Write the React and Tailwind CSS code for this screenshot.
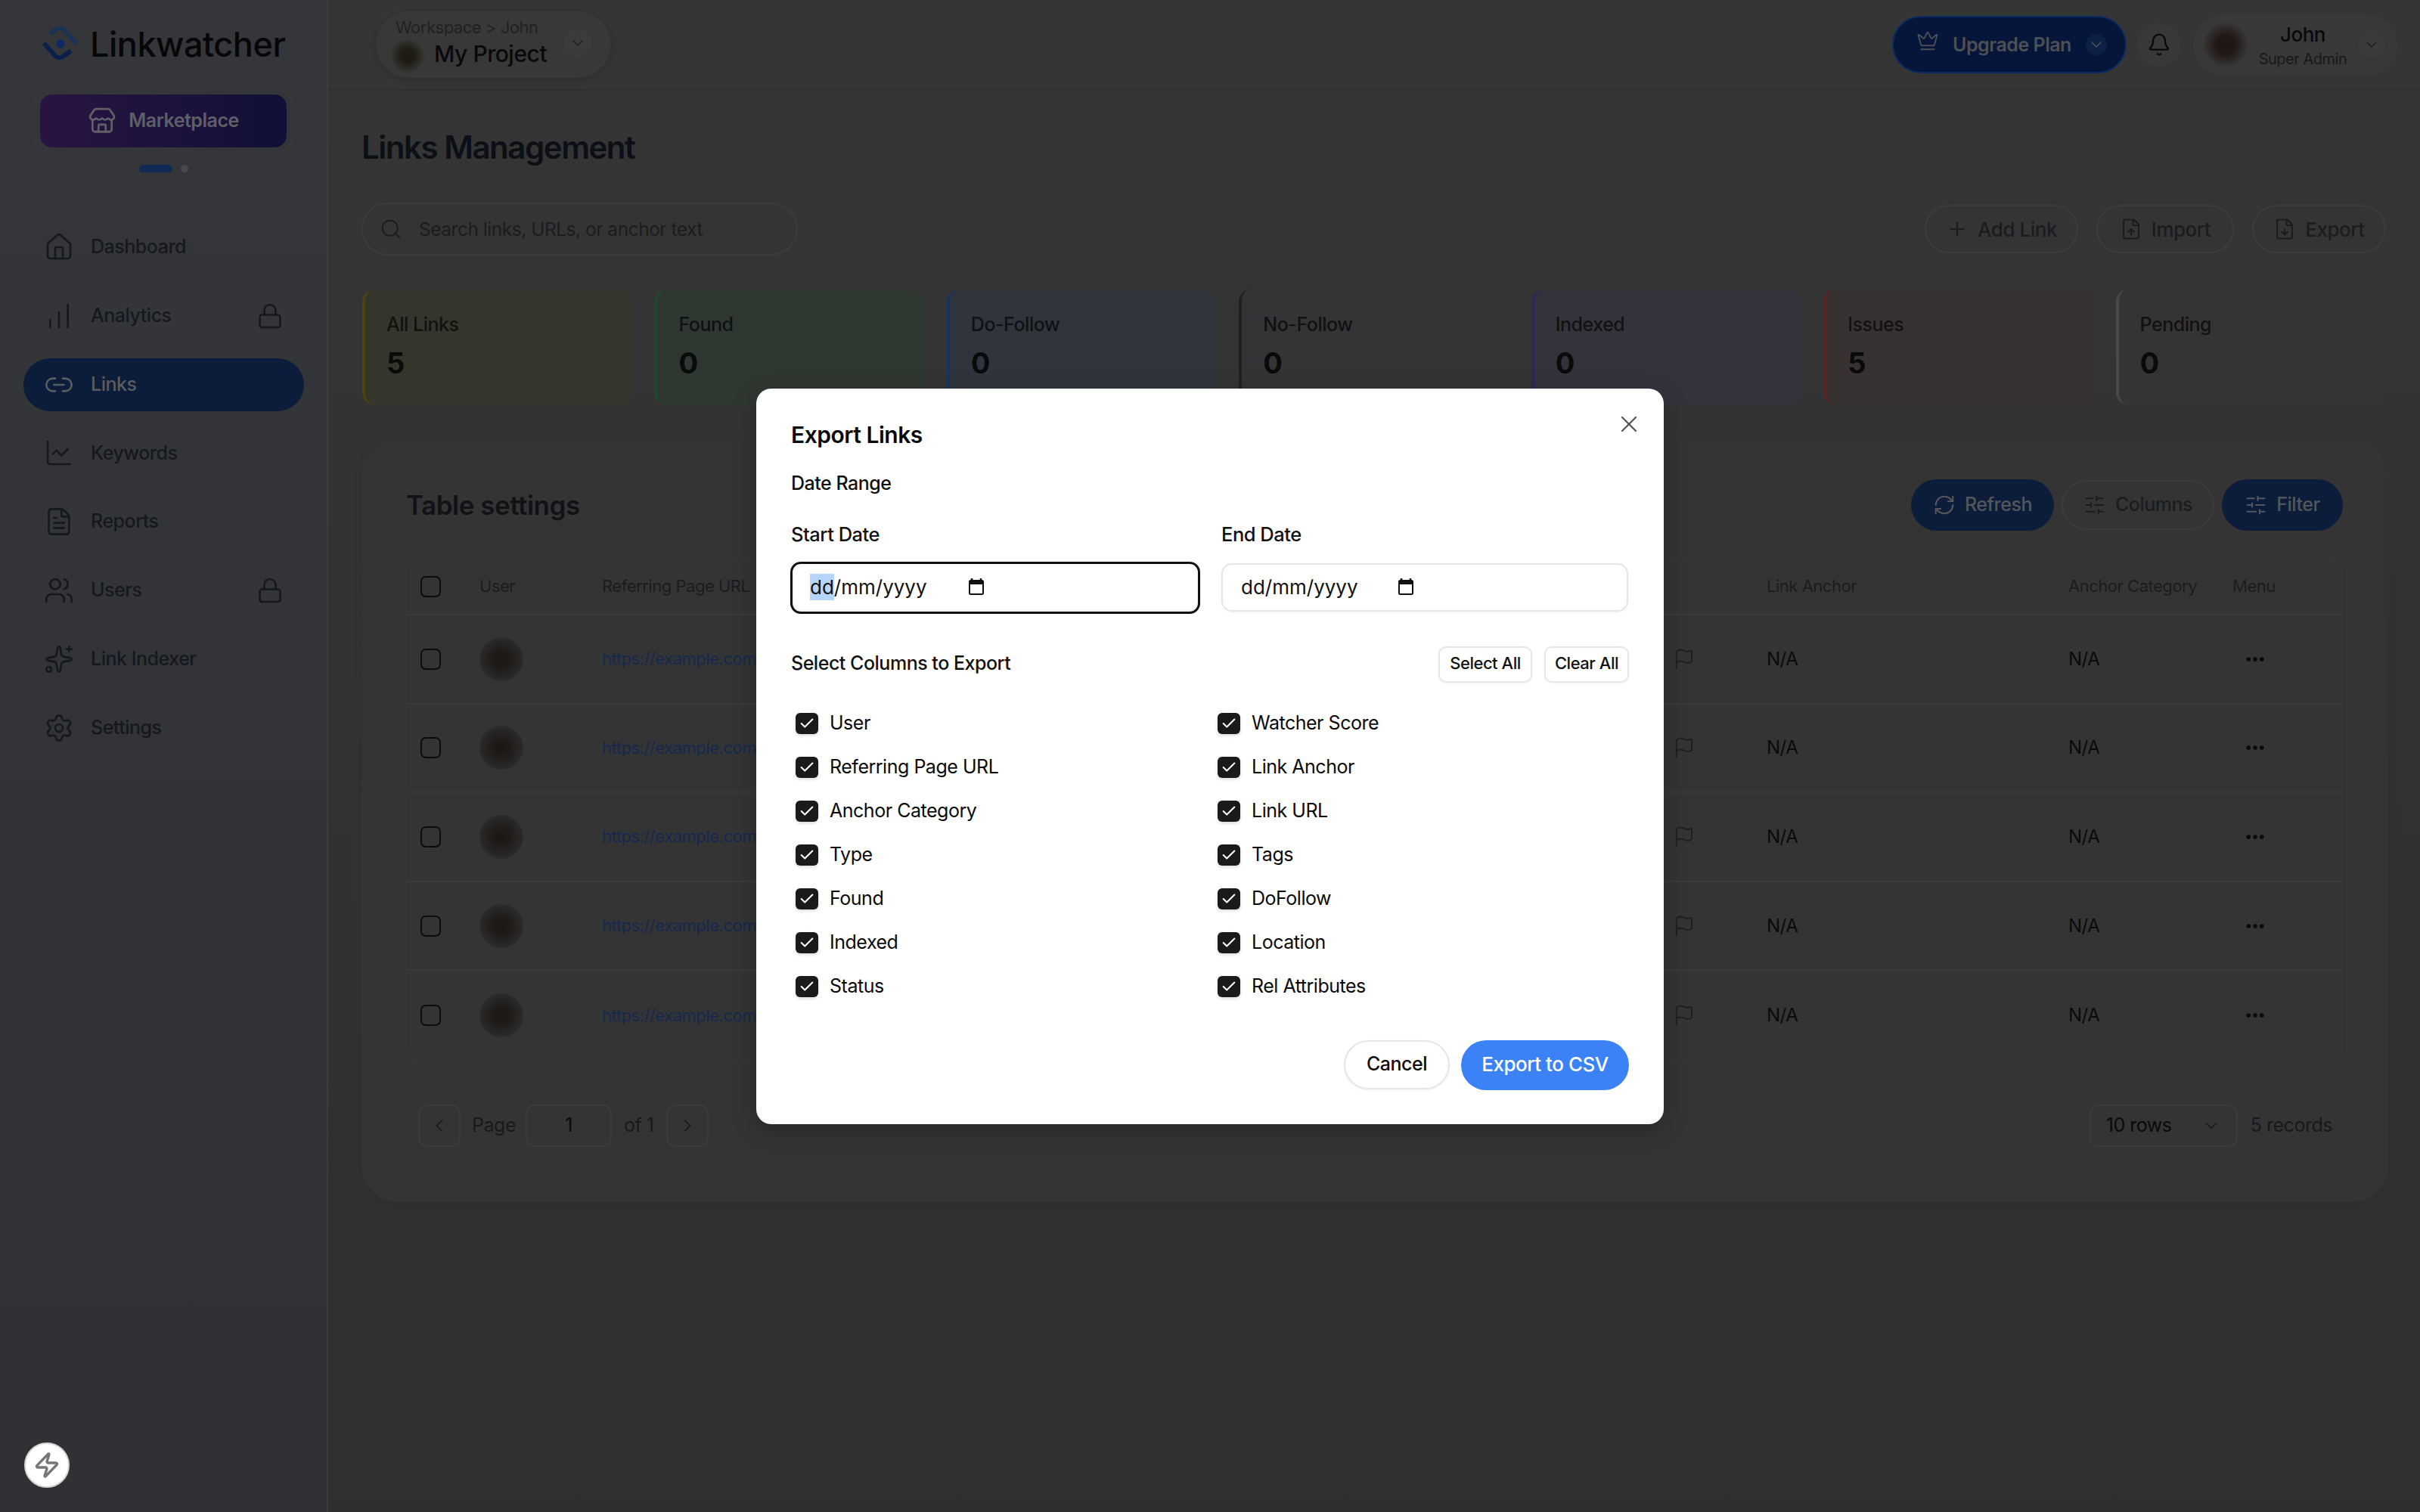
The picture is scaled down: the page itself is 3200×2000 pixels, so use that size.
import { Bell, Check, ChevronDown, ChevronLeft, ChevronRight, Crown, Ellipsis, FileDown, FileText, FileUp, Flag, House, ChartLine, ChartNoAxesColumnIncreasing, Link2, Lock, Plus, RefreshCw, Search, Settings, SlidersHorizontal, Sparkles, Store, Users, X, Zap } from "lucide-react";

const navItems = [
    { label: "Dashboard", icon: House },
    { label: "Analytics", icon: ChartNoAxesColumnIncreasing, locked: true },
    { label: "Links", icon: Link2, active: true },
    { label: "Keywords", icon: ChartLine },
    { label: "Reports", icon: FileText },
    { label: "Users", icon: Users, locked: true },
    { label: "Link Indexer", icon: Sparkles },
    { label: "Settings", icon: Settings },
];

const stats = [
    { label: "All Links", value: "5", card: "bg-[#35362b] border-[#4f420c]" },
    { label: "Found", value: "0", card: "bg-[#2f3731] border-[#1d4a2c]" },
    { label: "Do-Follow", value: "0", card: "bg-[#2f343d] border-[#17335f]" },
    { label: "No-Follow", value: "0", card: "bg-[#333435] border-[#1f2124]" },
    { label: "Indexed", value: "0", card: "bg-[#34333c] border-[#33235c]" },
    { label: "Issues", value: "5", card: "bg-[#383131] border-[#5c2323]" },
    { label: "Pending", value: "0", card: "bg-[#343434] border-[#484848]" },
];

const leftColumns = ["User", "Referring Page URL", "Anchor Category", "Type", "Found", "Indexed", "Status"];
const rightColumns = ["Watcher Score", "Link Anchor", "Link URL", "Tags", "DoFollow", "Location", "Rel Attributes"];
const rows = [1, 2, 3, 4, 5];

const gridCols = "grid grid-cols-[96px_162px_1421px_119px_399px_217px_145px] items-center";

const Logo = () => (
    <svg width="50" height="46" viewBox="0 0 50 46" fill="none">
        <path d="M10 10 L19 3 Q23 0 27 3 L46 23" stroke="#1a3350" strokeWidth="6" strokeLinecap="butt" strokeLinejoin="round" />
        <path d="M2 22 L17 39 Q22 43 27 40 L38 32" stroke="#0a1f4a" strokeWidth="6" strokeLinecap="butt" strokeLinejoin="round" />
        <circle cx="24" cy="23" r="5.5" fill="#0f2a66" />
    </svg>
);

const Pill = ({ icon: Icon, children, primary, className }) => (
    <button
        className={`flex items-center justify-center gap-[12px] rounded-full font-medium ${primary ? "bg-[#0b1d3a] text-[#54565b]" : "border-2 border-[#3c3c3c] text-[#1a1c1f]"} ${className}`}
    >
        <Icon size={30} strokeWidth={1.75} />
        {children}
    </button>
);

const Sidebar = () => (
    <aside className="flex w-[434px] shrink-0 flex-col border-r-2 border-[#393c40] bg-linear-to-b from-[#35363a] to-[#303134] pt-[36px]">
        <div className="ml-[56px] flex h-[44px] items-center gap-[13px]">
            <Logo />
            <span className="text-[45px] leading-none font-medium text-[#060709]">Linkwatcher</span>
        </div>
        <div className="mt-[37px] ml-[45px] h-[85px] w-[342px] rounded-[22px] border-2 border-[#38383a] p-[6px]">
            <div className="flex h-[70px] items-center justify-center gap-[16px] rounded-[16px] bg-linear-to-r from-[#2a1342] to-[#0f1038] text-[25px] font-semibold text-[#5f5f66]">
                <Store size={38} strokeWidth={1.75} />
                Marketplace
            </div>
        </div>
        <div className="mt-[16px] flex items-center justify-center gap-[11px]">
            <span className="h-[10px] w-[44px] rounded-full bg-[#0f2a55]"></span>
            <span className="h-[10px] w-[10px] rounded-full bg-[#484a4c]"></span>
        </div>
        <nav className="mt-[64px] ml-[31px] flex w-[371px] flex-col gap-[20.8px]">
            {navItems.map((item) => (
                <div
                    key={item.label}
                    className={`flex h-[70px] items-center gap-[22px] rounded-full pr-[27px] pl-[27px] text-[25px] font-medium ${item.active ? "bg-[#0b1d3a] text-[#5a5c60]" : "text-[#15181c]"}`}
                >
                    <item.icon size={40} strokeWidth={1.6} />
                    <span>{item.label}</span>
                    {item.locked && <Lock size={36} strokeWidth={1.75} className="ml-auto" />}
                </div>
            ))}
        </nav>
    </aside>
);

const ChevronCircle = ({ className }) => (
    <span className={`flex items-center justify-center rounded-full ${className}`}>
        <ChevronDown size={24} strokeWidth={1.75} />
    </span>
);

const Header = () => (
    <header className="flex h-[120px] shrink-0 items-center border-b-2 border-[#303030] pr-[30px] pl-[63px]">
        <div className="relative flex h-[88px] w-[311px] items-center rounded-full bg-[#383838] pl-[20px] shadow-[0_2px_8px_rgba(0,0,0,0.15)]">
            <div className="mt-[30px] h-[44px] w-[44px] rounded-full bg-[radial-gradient(circle,#1c1a10_0%,#1f1d13_30%,#383838_75%)]"></div>
            <div className="mb-[6px] ml-[13px] flex flex-col">
                <span className="-ml-[51px] text-[22px] leading-[30px] text-[#1f2124]">Workspace &gt; John</span>
                <span className="text-[30px] leading-[40px] font-medium text-[#08090c]">My Project</span>
            </div>
            <ChevronCircle className="absolute top-[24px] right-[26px] h-[36px] w-[36px] bg-[#3b3b3b] text-[#1f2124]" />
        </div>
        <div className="ml-auto flex h-[76px] w-[310px] items-center rounded-full border-2 border-[#0b2b63] bg-[#05163a] pr-[24px] pl-[30px] text-[25px] font-semibold text-[#4e4f55]">
            <Crown size={30} strokeWidth={1.5} className="-mt-[10px]" />
            <span className="ml-[18px] pt-[2px]">Upgrade Plan</span>
            <ChevronCircle className="ml-auto h-[28px] w-[28px] bg-[#0d2147] text-[#4e4f55]" />
        </div>
        <div className="mr-[16px] ml-[14px] flex h-[57px] w-[58px] items-center justify-center rounded-full bg-[#383838]">
            <Bell size={32} strokeWidth={1.75} className="text-[#08090c]" />
        </div>
        <div className="flex h-[81px] w-[270px] items-center rounded-full border-2 border-[#393939] bg-[#383838] pr-[14px] pl-[12px]">
            <div className="h-[58px] w-[58px] rounded-full bg-[radial-gradient(circle,#1f1612_0%,#211814_30%,#383838_75%)]"></div>
            <div className="flex flex-1 flex-col items-center pt-[2px]">
                <span className="text-[26px] leading-[36px] font-medium text-[#08090c]">John</span>
                <span className="text-[20px] leading-[28px] text-[#17191c]">Super Admin</span>
            </div>
            <ChevronCircle className="h-[36px] w-[36px] bg-[#3b3b3b] text-[#1f2124]" />
        </div>
    </header>
);

const TableCard = () => (
    <section className="mt-[45px] rounded-[48px] bg-[#343434] pt-[54px] pr-[60px] pb-[73px] pl-[59px] shadow-[0_4px_16px_rgba(0,0,0,0.05)]">
        <div className="flex h-[68px] items-center">
            <h2 className="text-[35px] font-semibold text-[#101216]">Table settings</h2>
            <div className="ml-auto flex items-center gap-[10px] text-[25px]">
                <Pill icon={RefreshCw} primary className="h-[68px] w-[189px]">Refresh</Pill>
                <Pill icon={SlidersHorizontal} className="h-[66px] w-[202px]">Columns</Pill>
                <Pill icon={SlidersHorizontal} primary className="h-[68px] w-[160px]">Filter</Pill>
            </div>
        </div>
        <div className="mt-[36px] rounded-[16px] border border-[#383838]">
            <div className={`${gridCols} h-[75px] border-b-2 border-[#3a3a3a] text-[22px] text-[#1a1c1f]`}>
                <span className="ml-[18px] h-[28px] w-[27px] rounded-[7px] border-2 border-[#0c0c0c]"></span>
                <span>User</span>
                <span>Referring Page URL</span>
                <span></span>
                <span>Link Anchor</span>
                <span>Anchor Category</span>
                <span>Menu</span>
            </div>
            {rows.map((row) => (
                <div key={row} className={`${gridCols} h-[117.6px] border-b-2 border-[#3a3a3a] text-[24px] text-[#0a0a0a] last:border-b-0`}>
                    <span className="ml-[18px] h-[28px] w-[27px] rounded-[7px] border-2 border-[#0c0c0c]"></span>
                    <div className="h-[58px] w-[58px] rounded-full bg-[radial-gradient(circle,#1a1614_0%,#1f1c1a_30%,#363636_100%)]"></div>
                    <span className="text-[22px] whitespace-nowrap text-[#14294f]">https://example.com</span>
                    <Flag size={30} strokeWidth={1.5} className="-ml-[5px] text-[#1d1f22]" />
                    <span>N/A</span>
                    <span>N/A</span>
                    <Ellipsis size={30} strokeWidth={2.5} className="ml-[15px]" />
                </div>
            ))}
        </div>
        <div className="mt-[58px] flex h-[56px] items-center pr-[14px] pl-[16px] text-[25px] text-[#17191c]">
            <span className="flex h-[56px] w-[56px] items-center justify-center rounded-[12px] border-2 border-[#3c3c3c]">
                <ChevronLeft size={28} strokeWidth={1.5} />
            </span>
            <span className="ml-[15px] w-[56px]">Page</span>
            <span className="ml-[15px] flex h-[56px] w-[114px] items-center justify-center rounded-[12px] border-2 border-[#3c3c3c] text-[#0a0a0a]">1</span>
            <span className="ml-[16px] w-[40px]">of 1</span>
            <span className="ml-[16px] flex h-[56px] w-[56px] items-center justify-center rounded-[12px] border-2 border-[#3c3c3c]">
                <ChevronRight size={28} strokeWidth={1.5} />
            </span>
            <span className="ml-auto flex h-[56px] w-[196px] items-center justify-between rounded-[12px] border-2 border-[#3c3c3c] pr-[20px] pl-[20px] text-[#0a0a0a]">
                10 rows
                <ChevronDown size={26} strokeWidth={1.5} className="text-[#17191c]" />
            </span>
            <span className="ml-[17px]">5 records</span>
        </div>
    </section>
);

const CalendarGlyph = () => (
    <svg width="20" height="22" viewBox="0 0 20 22" fill="none">
        <path d="M4 0v3M16 0v3" stroke="#111" strokeWidth="2.5" />
        <rect x="1" y="3" width="18" height="18" rx="1.5" stroke="#111" strokeWidth="2" />
        <rect x="1" y="3" width="18" height="5" fill="#111" />
    </svg>
);

const ColumnCheck = ({ label }) => (
    <label className="flex h-[58px] items-center gap-[15px] text-[25px] text-[#0a0a0a]">
        <span className="flex h-[28px] w-[30px] items-center justify-center rounded-[6px] bg-[#1a1a1a] shadow-[0_2px_4px_rgba(0,0,0,0.15)]">
            <Check size={22} strokeWidth={2.25} className="text-white" />
        </span>
        {label}
    </label>
);

const ExportModal = () => (
    <div className="absolute inset-0 flex items-center justify-center">
        <div className="relative w-[1200px] rounded-[20px] bg-white px-[46px] pt-[41px] pb-[45px] shadow-[0_8px_30px_rgba(0,0,0,0.25)]">
            <X size={36} strokeWidth={1.5} className="absolute top-[29px] right-[28px] text-[#555]" />
            <h3 className="text-[30px] leading-[40px] font-semibold text-[#0a0a0a]">Export Links</h3>
            <p className="mt-[28px] text-[25px] leading-[32px] font-medium text-[#111]">Date Range</p>
            <div className="mt-[36px] grid grid-cols-[542px_538px] gap-x-[27px] text-[25.5px] leading-[32px] font-medium text-[#111]">
                <span>Start Date</span>
                <span>End Date</span>
            </div>
            <div className="mt-[20px] -ml-[1px] flex h-[69px] items-center gap-[28px] text-[26px] tracking-normal text-[#111]">
                <div className="flex h-[69px] w-[542px] items-center rounded-[14px] border-[3px] border-[#111] pb-[2px] pl-[23px] shadow-[inset_0_-2px_3px_rgba(0,0,0,0.08)]">
                    <span className="w-[210px]"><span className="bg-[#b5d5ff] py-[2px]">dd</span>/mm/yyyy</span>
                    <CalendarGlyph />
                </div>
                <div className="flex h-[64px] w-[538px] items-center rounded-[14px] border-2 border-[#e6e6e6] pb-[2px] pl-[24px] shadow-[0_1px_3px_rgba(0,0,0,0.06)]">
                    <span className="w-[208px]">dd/mm/yyyy</span>
                    <CalendarGlyph />
                </div>
            </div>
            <div className="mt-[43px] flex h-[48px] items-center font-medium text-[#111]">
                <span className="pb-[2px] text-[25px]">Select Columns to Export</span>
                <button className="ml-auto h-[48px] w-[124px] rounded-[10px] border-2 border-[#e6e6e6] pb-[3px] text-[22px] font-medium shadow-[0_1px_3px_rgba(0,0,0,0.06)]">Select All</button>
                <button className="ml-[16px] h-[48px] w-[112px] rounded-[10px] border-2 border-[#e6e6e6] pb-[3px] text-[22px] font-medium shadow-[0_1px_3px_rgba(0,0,0,0.06)]">Clear All</button>
            </div>
            <div className="mt-[25px] grid grid-cols-[558px_1fr] pl-[6px]">
                {leftColumns.map((label, i) => (
                    <div key={label} className="contents">
                        <ColumnCheck label={label} />
                        <ColumnCheck label={rightColumns[i]} />
                    </div>
                ))}
            </div>
            <div className="mt-[42px] flex items-center justify-end gap-[15px] font-medium">
                <button className="h-[65px] w-[140px] rounded-full border-2 border-[#e6e6e6] pb-[2px] text-[25px] text-[#0a0a0a] shadow-[0_1px_3px_rgba(0,0,0,0.06)]">Cancel</button>
                <button className="h-[66px] w-[222px] rounded-full bg-[#3b82f6] pb-[2px] text-[26px] text-white">Export to CSV</button>
            </div>
        </div>
    </div>
);

const App = () => (
    <div className="relative flex h-[2000px] w-[3200px] overflow-hidden bg-[#333333] font-['Inter',sans-serif] tracking-[-0.03em]">
        <Sidebar />
        <div className="flex min-w-0 flex-1 flex-col bg-linear-to-b from-[#353535] to-[#2f2f2f]">
            <Header />
            <main className="pt-[47px] pr-[42px] pl-[44px]">
                <h1 className="text-[42px] leading-[56px] font-semibold tracking-[-0.035em] text-[#0c0f16]">Links Management</h1>
                <div className="mt-[45px] flex items-center">
                    <div className="flex h-[70px] w-[577px] items-center gap-[22px] rounded-full border-2 border-[#3c3c3c] pl-[22px] text-[24.5px] text-[#1a1c1f]">
                        <Search size={30} strokeWidth={1.5} />
                        Search links, URLs, or anchor text
                    </div>
                    <div className="ml-auto flex gap-[24px] pr-[3px] text-[26px]">
                        <Pill icon={Plus} className="h-[64px] w-[203px]">Add Link</Pill>
                        <Pill icon={FileUp} className="h-[64px] w-[182px]">Import</Pill>
                        <Pill icon={FileDown} className="h-[64px] w-[177px]">Export</Pill>
                    </div>
                </div>
                <div className="mt-[45px] mr-[4px] ml-[1px] grid grid-cols-7 gap-[30px]">
                    {stats.map((stat) => (
                        <div key={stat.label} className={`h-[152px] rounded-[16px] border-l-4 pt-[28px] pl-[28px] ${stat.card}`}>
                            <p className="text-[25px] leading-[36px] font-medium text-[#111]">{stat.label}</p>
                            <p className="mt-[10px] text-[38px] leading-[46px] font-bold text-[#0a0a0a]">{stat.value}</p>
                        </div>
                    ))}
                </div>
                <TableCard />
            </main>
        </div>
        <ExportModal />
        <div className="absolute top-[1908px] left-[32px] flex h-[60px] w-[60px] items-center justify-center rounded-full border-2 border-[#d4d4d4] bg-white">
            <Zap size={36} strokeWidth={2.25} strokeLinejoin="miter" strokeLinecap="butt" className="text-[#777]" />
        </div>
    </div>
);

export default App;
